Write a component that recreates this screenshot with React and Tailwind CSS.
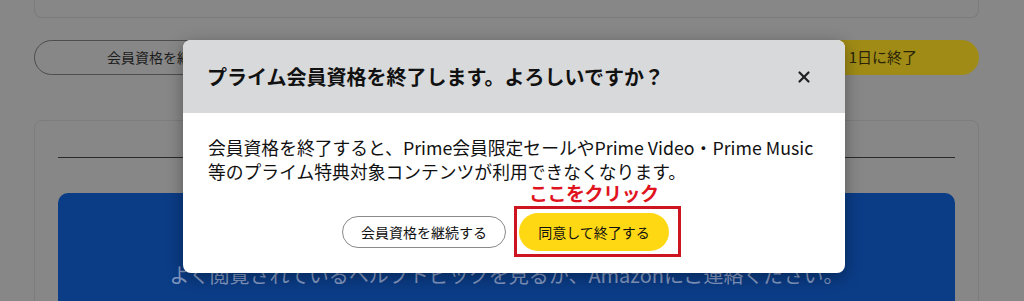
import { X } from 'lucide-react';

const jp = { fontFamily: '"Noto Sans CJK JP", "Noto Sans", sans-serif' };

function Backdrop() {
  return (
    <div className="ml-[34px] w-[945px]">
      <div className="h-[18px] rounded-b-lg border-x border-b border-[#7b7b7b]" />
      <div className="mt-[22px] flex h-[35px] gap-[12px]">
        <div className="flex w-[272px] items-center justify-center rounded-full border border-[#4d4d4d] text-[14px] text-[#1c1c1c]">
          会員資格を継続する
        </div>
        <div className="flex flex-1 items-center justify-end rounded-full bg-[#a08b16] pr-[62px] text-[15px] text-[#2a2508]">
          プライム会員資格を2024年5月 1日に終了
        </div>
      </div>
      <div className="mt-[45px] h-[200px] rounded-lg border border-[#7d7d7d] px-[23px] pt-[36px]">
        <div className="h-px bg-[#2a2a2a]" />
        <div className="mt-[35px] h-[140px] rounded-[10px] bg-[#0b3c86] pt-[67px] text-center text-[20px] text-[#8398c0]">
          よく閲覧されているヘルプトピックを見るか、Amazonにご連絡ください。
        </div>
      </div>
    </div>
  );
}

function Modal() {
  return (
    <div className="absolute left-[183px] top-[40px] w-[662px] overflow-hidden rounded-lg bg-white shadow-[0_4px_16px_rgba(0,0,0,0.35)]">
      <div className="flex h-[73px] items-center justify-between bg-[#d8d9da] pl-[24px] pr-[32px]">
        <h2 className="text-[20px] font-bold text-[#111]">プライム会員資格を終了します。よろしいですか？</h2>
        <X size={18} strokeWidth={3} className="text-[#222]" />
      </div>
      <div className="px-[25px] pb-[22px] pt-[22px]">
        <p className="text-[17.8px] leading-[24px] text-[#111]">
          会員資格を終了すると、Prime会員限定セールやPrime Video・Prime Music
          <br />
          等のプライム特典対象コンテンツが利用できなくなります。
        </p>
        <div className="mt-[30px] flex items-center gap-[13px] pl-[134px]">
          <button className="h-[32px] w-[164px] rounded-full border border-[#8a8a8a] bg-white text-[14px] text-[#111]">
            会員資格を継続する
          </button>
          <div className="relative">
            <span className="absolute left-[10px] top-[-29px] whitespace-nowrap text-[19px] font-bold leading-[17px] tracking-[-0.5px] text-[#e0141e]">
              ここをクリック
            </span>
            <div className="pointer-events-none absolute -bottom-[6px] -left-[5px] -right-[12px] -top-[7px] border-[3px] border-[#cc1520]" />
            <button className="h-[38px] w-[150px] rounded-full bg-[#ffd814] text-[14px] text-[#111]">
              同意して終了する
            </button>
          </div>
        </div>
      </div>
    </div>
  );
}

export default function App() {
  return (
    <div className="relative h-[301px] w-[1024px] overflow-hidden bg-[#878787]" style={jp}>
      <Backdrop />
      <Modal />
    </div>
  );
}
